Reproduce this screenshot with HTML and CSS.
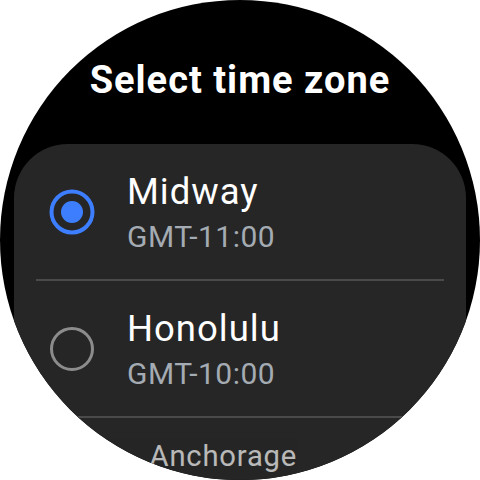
FILE: index.html
```html
<!DOCTYPE html>
<html>
<head>
<meta charset="utf-8">
<link rel="stylesheet" href="styles.css">
</head>
<body>
<div class="watch">
  <h1 class="title">Select time zone</h1>
  <div class="card">
    <div class="row">
      <svg class="radio" viewBox="0 0 46 46" width="46" height="46">
        <circle cx="23" cy="23" r="20.5" fill="none" stroke="#3d7efe" stroke-width="4"/>
        <circle cx="23" cy="23" r="11" fill="#3d7efe"/>
      </svg>
      <div class="texts">
        <div class="name">Midway</div>
        <div class="offset">GMT-11:00</div>
      </div>
    </div>
    <div class="sep"></div>
    <div class="row">
      <svg class="radio" viewBox="0 0 46 46" width="46" height="46">
        <circle cx="23" cy="23" r="20.5" fill="none" stroke="#8c8c8c" stroke-width="3"/>
      </svg>
      <div class="texts">
        <div class="name">Honolulu</div>
        <div class="offset">GMT-10:00</div>
      </div>
    </div>
    <div class="sep"></div>
    <div class="row row-far">
      <svg class="radio" viewBox="0 0 46 46" width="46" height="46">
        <circle cx="23" cy="23" r="20.5" fill="none" stroke="#8c8c8c" stroke-width="3"/>
      </svg>
      <div class="texts">
        <div class="name">Anchorage</div>
        <div class="offset">GMT-09:00</div>
      </div>
    </div>
  </div>
</div>
</body>
</html>
```
FILE: styles.css
```css
html, body {
  margin: 0;
  padding: 0;
  background: #ffffff;
}

.watch {
  width: 480px;
  height: 480px;
  border-radius: 50%;
  background: #000000;
  overflow: hidden;
  display: flex;
  flex-direction: column;
  font-family: Roboto, "Noto Sans", sans-serif;
}

.title {
  margin: 0;
  padding-top: 61px;
  font-size: 38px;
  line-height: 38px;
  font-weight: 700;
  letter-spacing: 1px;
  color: #ffffff;
  text-align: center;
}

.card {
  margin: 45px 14px 0;
  background: #262626;
  border-radius: 54px 54px 0 0;
  flex: 1 0 auto;
  display: flex;
  flex-direction: column;
}

.row {
  height: 135px;
  flex: 0 0 auto;
  display: flex;
  align-items: center;
  padding-left: 35px;
}

.radio {
  flex: 0 0 auto;
  display: block;
}

.texts {
  margin-left: 32px;
  display: flex;
  flex-direction: column;
}

.name {
  font-size: 36.5px;
  line-height: 50px;
  letter-spacing: 1px;
  color: #ffffff;
}

.offset {
  font-size: 30px;
  line-height: 40px;
  letter-spacing: 0.5px;
  color: #a4abb2;
}

.sep {
  height: 2px;
  margin: 0 22px;
  background: #4a4a4a;
  flex: 0 0 auto;
}

.row-far {
  transform: scale(0.8);
  transform-origin: 50% 0;
  opacity: 0.68;
}
```
